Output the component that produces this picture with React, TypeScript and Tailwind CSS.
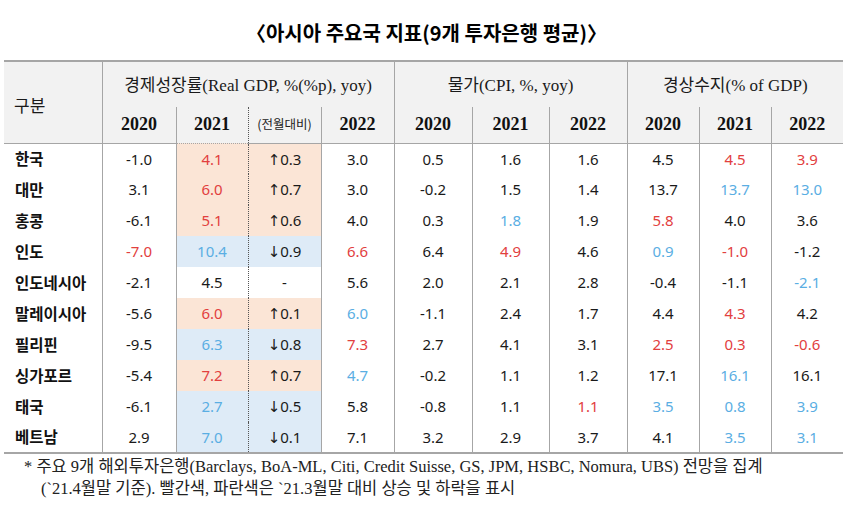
import React from "react";

type Tone = "k" | "r" | "b";
type Bg = "p" | "b" | "n";
type Row = { name: string; bg: Bg; cells: [string, Tone][] };

const rows: Row[] = [
  { name: "한국", bg: "p", cells: [["-1.0", "k"], ["4.1", "r"], ["↑0.3", "k"], ["3.0", "k"], ["0.5", "k"], ["1.6", "k"], ["1.6", "k"], ["4.5", "k"], ["4.5", "r"], ["3.9", "r"]] },
  { name: "대만", bg: "p", cells: [["3.1", "k"], ["6.0", "r"], ["↑0.7", "k"], ["3.0", "k"], ["-0.2", "k"], ["1.5", "k"], ["1.4", "k"], ["13.7", "k"], ["13.7", "b"], ["13.0", "b"]] },
  { name: "홍콩", bg: "p", cells: [["-6.1", "k"], ["5.1", "r"], ["↑0.6", "k"], ["4.0", "k"], ["0.3", "k"], ["1.8", "b"], ["1.9", "k"], ["5.8", "r"], ["4.0", "k"], ["3.6", "k"]] },
  { name: "인도", bg: "b", cells: [["-7.0", "r"], ["10.4", "b"], ["↓0.9", "k"], ["6.6", "r"], ["6.4", "k"], ["4.9", "r"], ["4.6", "k"], ["0.9", "b"], ["-1.0", "r"], ["-1.2", "k"]] },
  { name: "인도네시아", bg: "n", cells: [["-2.1", "k"], ["4.5", "k"], ["-", "k"], ["5.6", "k"], ["2.0", "k"], ["2.1", "k"], ["2.8", "k"], ["-0.4", "k"], ["-1.1", "k"], ["-2.1", "b"]] },
  { name: "말레이시아", bg: "p", cells: [["-5.6", "k"], ["6.0", "r"], ["↑0.1", "k"], ["6.0", "b"], ["-1.1", "k"], ["2.4", "k"], ["1.7", "k"], ["4.4", "k"], ["4.3", "r"], ["4.2", "k"]] },
  { name: "필리핀", bg: "b", cells: [["-9.5", "k"], ["6.3", "b"], ["↓0.8", "k"], ["7.3", "r"], ["2.7", "k"], ["4.1", "k"], ["3.1", "k"], ["2.5", "r"], ["0.3", "r"], ["-0.6", "r"]] },
  { name: "싱가포르", bg: "p", cells: [["-5.4", "k"], ["7.2", "r"], ["↑0.7", "k"], ["4.7", "b"], ["-0.2", "k"], ["1.1", "k"], ["1.2", "k"], ["17.1", "k"], ["16.1", "b"], ["16.1", "k"]] },
  { name: "태국", bg: "b", cells: [["-6.1", "k"], ["2.7", "b"], ["↓0.5", "k"], ["5.8", "k"], ["-0.8", "k"], ["1.1", "k"], ["1.1", "r"], ["3.5", "b"], ["0.8", "b"], ["3.9", "b"]] },
  { name: "베트남", bg: "b", cells: [["2.9", "k"], ["7.0", "b"], ["↓0.1", "k"], ["7.1", "k"], ["3.2", "k"], ["2.9", "k"], ["3.7", "k"], ["4.1", "k"], ["3.5", "b"], ["3.1", "b"]] },
];

const toneCls: Record<Tone, string> = {
  k: "text-[#1a1a1a]",
  r: "text-[#e2403e]",
  b: "text-[#5aaee3]",
};

const bgCls: Record<Bg, string> = {
  p: "bg-[#fbe5d6]",
  b: "bg-[#deebf7]",
  n: "",
};

const borderCls = (i: number) => {
  if (i === 1) return "border-r border-dotted border-r-[#555555]";
  if (i === 9) return "";
  return "border-r border-solid border-r-[#a6a6a6]";
};

const widths = [98, 74, 72, 73, 73, 78, 77, 78, 72, 72, 72];

const serif = "font-['Liberation_Serif','Noto_Sans_CJK_KR',serif]";
const kr = "font-['Noto_Sans_CJK_KR',sans-serif]";
const num = "font-['Noto_Sans','DejaVu_Sans',sans-serif]";

export default function App() {
  const years = ["2020", "2021", "(전월대비)", "2022", "2020", "2021", "2022", "2020", "2021", "2022"];
  return (
    <div className="w-[853px] h-[524px] bg-white overflow-hidden">
      <div className={`pt-[19px] text-center text-[20px] leading-[28px] font-bold text-black ${kr}`}>
        〈아시아 주요국 지표(9개 투자은행 평균)〉
      </div>
      <table className="mt-[13px] ml-[4px] w-[839px] table-fixed border-collapse">
        <colgroup>
          {widths.map((w, i) => (
            <col key={i} style={{ width: w }} />
          ))}
        </colgroup>
        <thead>
          <tr className="h-[46px] bg-[#f2f2f2]">
            <th
              rowSpan={2}
              className={`border-t-2 border-t-[#a6a6a6] border-r border-r-[#a6a6a6] border-b border-b-[#a6a6a6] pl-[10px] pt-[4px] text-left align-middle text-[17px] font-normal text-[#1a1a1a] ${kr}`}
            >
              구분
            </th>
            <th colSpan={4} className="border-t-2 border-t-[#a6a6a6] border-r border-r-[#a6a6a6] pt-[1px] text-center font-normal text-[#1a1a1a]">
              <span className={`text-[17px] ${kr}`}>경제성장률</span>
              <span className={`text-[17px] ${serif}`}>(Real GDP, %(%p), yoy)</span>
            </th>
            <th colSpan={3} className="border-t-2 border-t-[#a6a6a6] border-r border-r-[#a6a6a6] pt-[1px] text-center font-normal text-[#1a1a1a]">
              <span className={`text-[17px] ${kr}`}>물가</span>
              <span className={`text-[17px] ${serif}`}>(CPI, %, yoy)</span>
            </th>
            <th colSpan={3} className="border-t-2 border-t-[#a6a6a6] pt-[1px] text-center font-normal text-[#1a1a1a]">
              <span className={`text-[17px] ${kr}`}>경상수지</span>
              <span className={`text-[17px] ${serif}`}>(% of GDP)</span>
            </th>
          </tr>
          <tr className="h-[36px] bg-[#f2f2f2]">
            {years.map((y, i) =>
              i === 2 ? (
                <th
                  key={i}
                  className={`border-b border-b-[#a6a6a6] ${borderCls(i)} text-center text-[12.5px] font-normal text-[#222222] ${kr}`}
                >
                  {y}
                </th>
              ) : (
                <th
                  key={i}
                  className={`border-b border-b-[#a6a6a6] ${borderCls(i)} text-center text-[18px] font-bold text-[#111111] ${serif}`}
                >
                  {y}
                </th>
              )
            )}
          </tr>
        </thead>
        <tbody>
          {rows.map((r, ri) => (
            <tr key={r.name} className={`h-[31px] ${ri === rows.length - 1 ? "border-b-2 border-b-[#a6a6a6]" : ""}`}>
              <td className={`border-r border-r-[#a6a6a6] pl-[11px] text-left text-[15.5px] font-bold text-[#111111] ${kr}`}>
                {r.name}
              </td>
              {r.cells.map(([v, t], i) => (
                <td
                  key={i}
                  className={`${borderCls(i)} ${i === 1 || i === 2 ? bgCls[r.bg] : ""} text-center text-[15px] ${toneCls[t]} ${num}`}
                >
                  {v}
                </td>
              ))}
            </tr>
          ))}
        </tbody>
      </table>
      <div className={`mt-[2px] pl-[24px] text-[16.5px] leading-[22px] text-[#222222] ${serif}`}>
        <div className="whitespace-nowrap">
          * 주요 9개 해외투자은행(Barclays, BoA-ML, Citi, Credit Suisse, GS, JPM, HSBC, Nomura, UBS) 전망을 집계
        </div>
        <div className="whitespace-nowrap pl-[17px]">
          (`21.4월말 기준). 빨간색, 파란색은 `21.3월말 대비 상승 및 하락을 표시
        </div>
      </div>
    </div>
  );
}
